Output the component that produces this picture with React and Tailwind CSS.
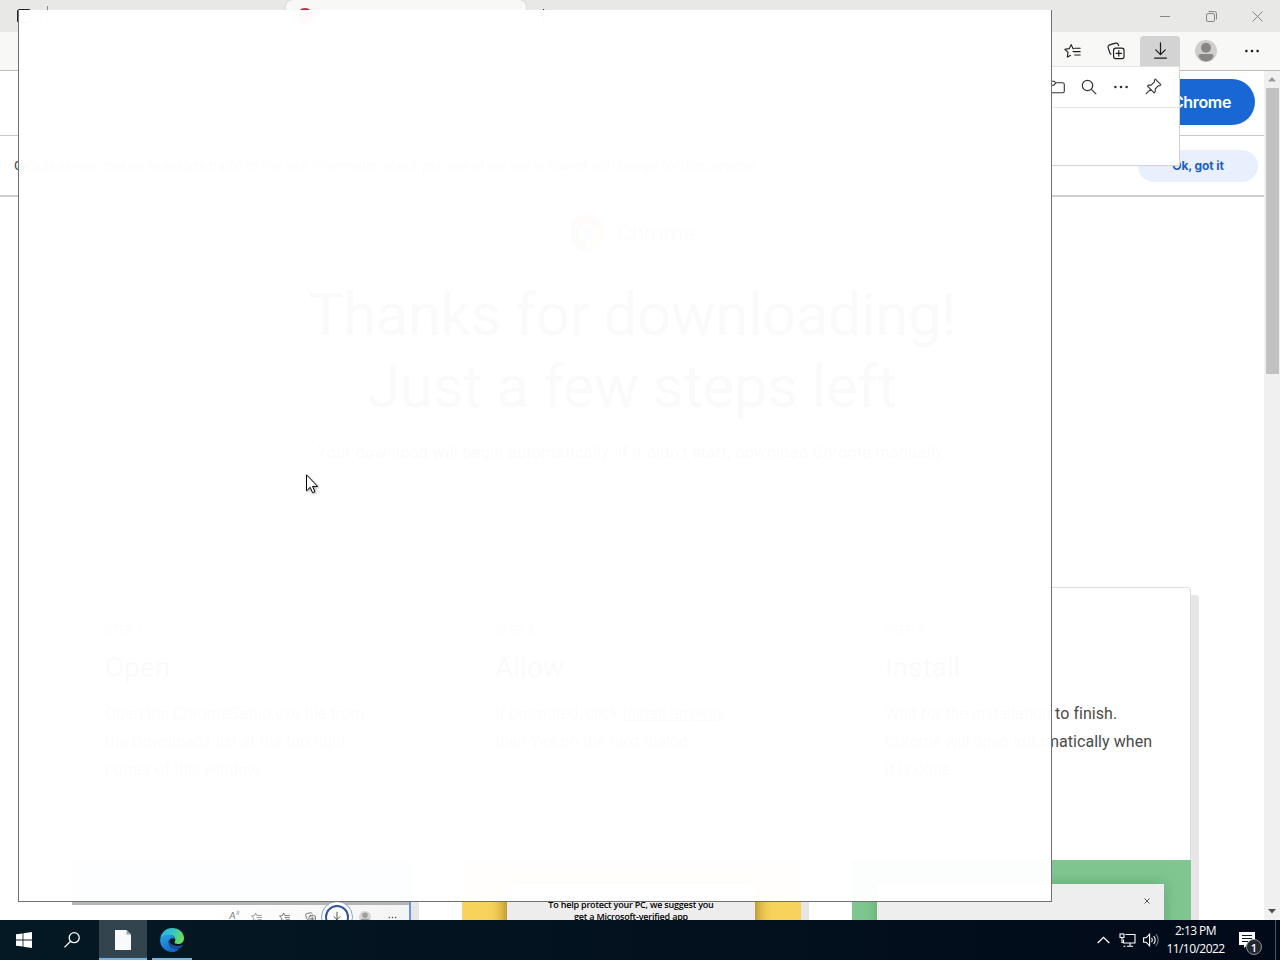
import React from 'react';

const ChromeLogo = () => (
  <svg width="36" height="36" viewBox="0 0 36 36">
    <circle cx="18" cy="18" r="18" fill="#fbc02d" />
    <path d="M18 18 L2.4 9 A18 18 0 0 1 33.6 9 Z" fill="#ea4335" />
    <path d="M18 18 L2.4 9 A18 18 0 0 0 18 36 Z" fill="#34a853" />
    <circle cx="18" cy="18" r="8.5" fill="#fff" />
    <circle cx="18" cy="18" r="6.8" fill="#4285f4" />
  </svg>
);

const FavoritesIcon = ({ size = 20 }) => (
  <svg width={size} height={size} viewBox="0 0 20 20" fill="none" stroke="currentColor" strokeWidth="1.3" strokeLinejoin="round" strokeLinecap="round">
    <path d="M11.4 6.600L10.600 6.500 8.400 1.900 6.200 6.600 1 7.400l3.800 3.700-0.900 5.400 3.600-1.900" />
    <path d="M12.600 6.200H19M10.800 10.200H19M12.600 14.200H19" />
  </svg>
);

const CollectionsIcon = ({ size = 20 }) => (
  <svg width={size} height={size} viewBox="0 0 20 20" fill="none" stroke="currentColor" strokeWidth="1.3" strokeLinecap="round">
    <path d="M4.400 13.600 a3 3 0 0 1-1.300-1.600 L1.300 6.200 a2.400 2.400 0 0 1 1.600-3 L9.600 1.300 a2.400 2.400 0 0 1 2.900 1.500 L12.900 4" />
    <rect x="7.3" y="6.800" width="11.600" height="11.600" rx="2.400" fill="#f7f7f7" />
    <path d="M13.100 9.600v6M10.100 12.600h6" />
  </svg>
);

const DownloadIcon = ({ size = 20 }) => (
  <svg width={size} height={size} viewBox="0 0 20 20" fill="none" stroke="currentColor" strokeWidth="1.3" strokeLinecap="round">
    <path d="M10 2v12.200M5 9.400l5 5 5-5M3.800 18h12.400" />
  </svg>
);

const AvatarIcon = ({ size = 22 }) => (
  <svg width={size} height={size} viewBox="0 0 22 22">
    <circle cx="11" cy="11" r="11" fill="#cfcecc" />
    <circle cx="11" cy="7.8" r="5" fill="#888785" />
    <path d="M3.4 16.2q0-2.2 2.6-2.2h10q2.6 0 2.6 2.2Q16 21.4 11 21.4T3.4 16.2z" fill="#888785" />
  </svg>
);

const DotsIcon = ({ size = 16 }) => (
  <svg width={size} height={size} viewBox="0 0 16 16" fill="currentColor">
    <circle cx="2.4" cy="8" r="1.3" />
    <circle cx="8" cy="8" r="1.3" />
    <circle cx="13.6" cy="8" r="1.3" />
  </svg>
);

const TitleBar = () => (
  <div className="flex h-8 shrink-0 bg-[#e8e8e7]">
    <div className="flex w-[286px] gap-4 pl-[17px] pt-[9px]">
      <svg width="14" height="14" viewBox="0 0 14 14" fill="none" stroke="#222" strokeWidth="1.2">
        <rect x="0.6" y="0.6" width="12.8" height="12.8" rx="2" />
      </svg>
      <div className="-mt-[3px] h-5 w-px bg-[#8a8a8a]" />
    </div>
    <div className="flex w-60 rounded-t-md bg-[#f8f8f7] pl-[11px] pt-2 shadow-[0_0_1px_#999]">
      <div className="h-4 w-4 rounded-full bg-[#c5283d]" />
    </div>
    <div className="pl-[11px] pt-[9px]">
      <svg width="13" height="13" viewBox="0 0 13 13" stroke="#333" strokeWidth="1.2">
        <path d="M6.5 0v13M0 6.5h13" />
      </svg>
    </div>
    <div className="ml-auto flex text-[#858585]">
      <div className="flex w-[46px] items-center justify-center">
        <svg width="10" height="10" stroke="currentColor"><path d="M0 5.5h10" /></svg>
      </div>
      <div className="flex w-[46px] items-center justify-center">
        <svg width="11" height="11" viewBox="0 0 11 11" fill="none" stroke="currentColor">
          <rect x="0.5" y="2.5" width="8" height="8" rx="1.5" />
          <path d="M2.5 .5h6a2 2 0 0 1 2 2v6" />
        </svg>
      </div>
      <div className="flex w-[46px] items-center justify-center">
        <svg width="11" height="11" viewBox="0 0 11 11" stroke="currentColor"><path d="M.5 .5l10 10M10.5 .5l-10 10" /></svg>
      </div>
    </div>
  </div>
);

const Toolbar = () => (
  <div className="flex h-[39px] shrink-0 items-center justify-end border-b border-[#bdbdbd] bg-[#f8f8f7] text-[#1b1b1b]">
    <div className="flex w-11 justify-center"><FavoritesIcon size={17} /></div>
    <div className="flex w-11 justify-center"><CollectionsIcon size={18} /></div>
    <div className="ml-0.5 flex h-[34px] w-10 justify-center self-end rounded-t bg-[#d3d3d3] pt-[5px]"><DownloadIcon size={19} /></div>
    <div className="ml-[15px] flex"><AvatarIcon /></div>
    <div className="ml-[27px] mr-5 flex"><DotsIcon size={16} /></div>
  </div>
);

const DownloadsFlyout = () => (
  <div className="absolute right-[100px] top-[66px] h-[100px] w-[360px] border border-t-[#e2e2e2] border-[#d2d2d2] bg-white text-[#333]">
    <div className="flex h-[41px] items-center justify-end gap-4 border-b border-[#e6e6e6] pb-px pr-[17px]">
      <svg width="16" height="16" viewBox="0 0 16 16" fill="none" stroke="currentColor" strokeWidth="1.1">
        <path d="M.6 3.8q0-1.6 1.6-1.6h3l1.6 1.6h6.8q1.7 0 1.7 1.6v6.8q0 1.6-1.7 1.6H2.2q-1.6 0-1.6-1.6zM.6 6.2h4.2l2-2.4" />
      </svg>
      <svg width="16" height="16" viewBox="0 0 16 16" fill="none" stroke="currentColor" strokeWidth="1.2">
        <circle cx="6.5" cy="6.5" r="5.2" />
        <path d="M10.3 10.3l4.9 4.9" />
      </svg>
      <DotsIcon size={16} />
      <svg width="17" height="17" viewBox="0 0 17 17" fill="none" stroke="currentColor" strokeWidth="1.1" strokeLinejoin="round">
        <path d="M10.4 1.2l5.4 5.4-1 1-1.4.1-3.2 3.3.1 2.5-1.1 1.3-6.7-6.7 1.2-1.1 2.5.1L9.4 3.8V2.3zM5.8 11.2l-5 5" />
      </svg>
    </div>
  </div>
);

const MiniToolbar = () => (
  <div className="flex flex-1 flex-col border-r-2 border-[#6f93d8] bg-white">
    <div className="h-[45px] shrink-0 border-b-[3px] border-[#b5b5b5] bg-[#9cc8f2]" />
    <div className="flex h-6 shrink-0 items-center justify-end bg-gradient-to-r from-white from-40% to-[#f4f4f5] pr-3 text-[#444]">
      <span className="mb-1 mr-3 font-['Lato'] text-[10px] italic leading-none text-[#777]">A⁾⁾</span>
      <span className="mr-[17px] text-[#777]"><FavoritesIcon size={11} /></span>
      <span className="mr-[15px]"><FavoritesIcon size={11} /></span>
      <span className="mr-[5px]"><CollectionsIcon size={11} /></span>
      <span className="flex h-8 w-8 items-center justify-center rounded-full border border-[#7da2e0] bg-white">
        <span className="flex h-6 w-6 items-center justify-center rounded-full border-2 border-[#34549c] text-[#222]"><DownloadIcon size={12} /></span>
      </span>
      <span className="ml-1.5 mr-[17px] opacity-80"><AvatarIcon size={12} /></span>
      <DotsIcon size={9} />
    </div>
  </div>
);

const StepCard = ({ step, title, children, picture }) => (
  <div className="flex h-[420px] w-[339px] shrink-0 flex-col rounded border border-[#dcdcdc] bg-white font-['Roboto'] text-[#4a4a4a] shadow-[8px_8px_0_#e6e6e6]">
    <div className="h-[272px] shrink-0 pl-8 pt-8">
      <p className="text-xs leading-5">{step}</p>
      <h2 className="mb-3 mt-2 text-[28px] leading-10 text-[#202124]">{title}</h2>
      <div className="whitespace-nowrap text-base leading-7 tracking-[0.05px]">{children}</div>
    </div>
    <div className="-mx-px flex flex-1">{picture}</div>
  </div>
);

const Page = () => (
  <div className="flex min-h-0 flex-1">
    <div className="flex flex-1 flex-col overflow-hidden bg-white">
      <div className="flex h-[65px] shrink-0 items-center justify-end border-b border-[#c8c8c8] pr-[9px]">
        <div className="mb-0.5 flex h-[46px] items-center rounded-full bg-[#1967d2] px-6 font-['Inter'] text-base font-semibold tracking-[-0.35px] text-white">
          Download Chrome
        </div>
      </div>
      <div className="flex h-[61px] shrink-0 items-center justify-between border-b-2 border-[#cfcfcf] pl-3.5 pr-1.5 font-['Roboto'] text-[13px] text-[#3c4043]">
        <p>Google serves cookies to analyze traffic to this site. Information about your use of our site is shared with Google for that purpose.</p>
        <div className="flex h-8 w-[120px] items-center justify-center rounded-full bg-[#e8f0fe] font-['Inter'] text-xs font-bold tracking-[-0.1px] text-[#1f5fbe]">
          Ok, got it
        </div>
      </div>
      <div className="flex h-[390px] shrink-0 flex-col items-center pt-[18px] text-[#202124]">
        <div className="flex items-center gap-3 font-['Roboto'] text-[22px] text-[#5f6368]">
          <ChromeLogo />
          Chrome
        </div>
        <h1 className="mt-7 whitespace-nowrap text-center font-['Roboto'] text-[60px] leading-[72px] tracking-[-0.5px]">
          Thanks for downloading!<br />Just a few steps left
        </h1>
        <p className="mt-[18px] font-['Roboto'] text-base tracking-[0.4px]">
          Your download will begin automatically. If it didn’t start, download Chrome manually.
        </p>
      </div>
      <div className="flex gap-[51px] pl-[72px]">
        <StepCard step="STEP 1" title="Open" picture={<MiniToolbar />}>
          Open the ChromeSetup.exe file from<br />the Downloads list at the top right<br />corner of this window.
        </StepCard>
        <StepCard
          step="STEP 2"
          title="Allow"
          picture={
            <div className="flex flex-1 bg-[#f8d35c] pt-6">
              <div className="ml-[45px] w-[248px] bg-[#ededee] pt-[15px] text-center font-['Open_Sans'] text-[9px] font-semibold leading-3 tracking-[-0.2px] text-black shadow-[0_0_16px_#8a6a10]">
                To help protect your PC, we suggest you<br />get a Microsoft-verified app
              </div>
            </div>
          }
        >
          If prompted, click <u>Install anyway</u>,<br />then Yes on the next dialog.
        </StepCard>
        <StepCard
          step="STEP 3"
          title="Install"
          picture={
            <div className="flex flex-1 bg-[#7fc690] pt-6">
              <div className="ml-[25px] flex w-[287px] justify-end bg-[#eeeeee] pr-3.5 pt-[14px] shadow-[0_0_14px_#5fa873]">
                <svg width="6" height="6" stroke="#555" strokeWidth="1"><path d="M.5 .5l5 5M5.5 .5l-5 5" /></svg>
              </div>
            </div>
          }
        >
          Wait for the installation to finish.<br />Chrome will open automatically when<br />it is done.
        </StepCard>
      </div>
    </div>
    <div className="flex w-4 flex-col items-center bg-[#f0f0f0]">
      <svg className="my-1.5 shrink-0" width="8" height="5" fill="#999"><path d="M4 0l4 4.5H0z" /></svg>
      <div className="h-[286px] w-[13px] bg-[#c1c1c1]" />
      <svg className="mb-1.5 mt-auto shrink-0" width="8" height="5" fill="#505050"><path d="M0 0h8L4 4.5z" /></svg>
    </div>
  </div>
);

const EdgeLogo = () => (
  <svg width="24" height="24" viewBox="0 0 24 24">
    <defs>
      <linearGradient id="edgeTop" x1="0" y1="0.3" x2="1" y2="0.6">
        <stop offset="0" stopColor="#2bb3ea" />
        <stop offset="0.5" stopColor="#36c6c0" />
        <stop offset="1" stopColor="#6fe04e" />
      </linearGradient>
      <linearGradient id="edgeLeft" x1="0" y1="0" x2="0.6" y2="1">
        <stop offset="0" stopColor="#2aa6e6" />
        <stop offset="1" stopColor="#1464c4" />
      </linearGradient>
    </defs>
    <path d="M.2 11C1 4.500 6 0 12.200 0 19 0 24 4.800 24 10.200c0 3.600-2.700 5.900-6 5.900-2.600 0-4-1-3.300-2 1.500-2.200.4-7-5-7C5 7.100.8 9.500.2 11z" fill="url(#edgeTop)" />
    <path d="M.1 11.600C.6 8.800 4.500 6.700 9 6.700c3.500 0 5.600 2 6 4.300-4-2-7 1-6.200 4.600.8 3.700 5 6.200 10.600 4.800C17.500 22.800 15 24 12 24 5 24-.3 18.400.1 11.600z" fill="url(#edgeLeft)" />
    <path d="M9 12.600c-1.200 4.300 3 9.200 9.700 8.100 1.700-.4 3-1.500 3.900-2.900.3-.6-.1-.9-.6-.7-5.500 2.300-11.500 0-13-4.500z" fill="#1b4f9c" />
  </svg>
);

const Taskbar = () => (
  <div className="flex h-10 shrink-0 bg-gradient-to-r from-[#041923] to-[#020a19] text-white">
    <div className="flex w-12 items-center justify-center">
      <svg width="16" height="16" viewBox="0 0 16 16" fill="#fff">
        <path d="M0 2.300l6.600-.9v6.200H0zM7.400 1.300L16 0v7.600H7.400zM0 8.400h6.600v6.200L0 13.700zM7.400 8.400H16V16l-8.600-1.300z" />
      </svg>
    </div>
    <div className="flex w-12 items-center justify-center">
      <svg width="16" height="16" viewBox="0 0 16 16" fill="none" stroke="#fff" strokeWidth="1.3">
        <circle cx="10.200" cy="5.700" r="5" />
        <path d="M6.600 9.300L.5 15.400" />
      </svg>
    </div>
    <div className="ml-[3px] flex w-12 items-center justify-center border-b-2 border-[#76b5e4] bg-[#33444e] pt-0.5">
      <svg width="16" height="20" viewBox="0 0 16 20">
        <path d="M0 0h11.500L16 4.500V20H0z" fill="#f8fafb" />
        <path d="M11.500 0v4.500H16z" fill="#9aa5ab" />
      </svg>
    </div>
    <div className="ml-[5px] flex w-10 items-center justify-center border-b-2 border-[#76b5e4] pt-0.5"><EdgeLogo /></div>
    <div className="ml-auto flex items-center">
      <svg width="13" height="8" viewBox="0 0 13 8" fill="none" stroke="#fff" strokeWidth="1.3"><path d="M.7 7l5.800-5.600L12.300 7" /></svg>
      <svg className="ml-[9px]" width="17" height="14" viewBox="0 0 17 14" fill="none" stroke="#fff" strokeWidth="1.1">
        <path d="M6.500 1.500h9.500v8.500H4.500V6.500M8 13.300h6M11 10v3.300M4.500 13.300h2" />
        <rect x="1" y="1" width="4" height="3.500" />
        <path d="M3 4.500v5h2" />
      </svg>
      <svg className="ml-[7px]" width="17" height="14" viewBox="0 0 17 14" fill="none" stroke="#fff" strokeWidth="1.100">
        <path d="M.6 4.800h2.600l3.400-3.600v11.600L3.200 9.200H.6z" />
        <path d="M8.600 4.800q1.500 2.200 0 4.400M10.700 3q3 4 0 8" />
        <path d="M12.900 1.200q4.500 5.800 0 11.600" opacity="0.45" />
      </svg>
      <div className="ml-[5px] w-[61px] whitespace-nowrap text-center font-['Open_Sans'] text-xs leading-[18px] tracking-[-0.55px]">
        <p>2:13 PM</p>
        <p>11/10/2022</p>
      </div>
      <div className="relative ml-[13px] mr-3 w-[24px]">
        <svg width="16" height="16" viewBox="0 0 16 16">
          <path d="M0 0h16v13H8l-3 3v-3H0z" fill="#fff" />
          <path d="M3 3.500h10M3 6.500h10M3 9.500h6" stroke="#0a1622" strokeWidth="1.200" />
        </svg>
        <span className="absolute left-[7px] top-[7px] flex h-4 w-4 items-center justify-center rounded-full border border-[#8a8f96] bg-[#23282f] font-['Open_Sans'] text-[11px] font-semibold leading-none">1</span>
      </div>
      <div className="mr-1 h-10 w-px bg-[#4a525c]" />
    </div>
  </div>
);

// Window that is still fading in above the browser
const LoadingWindow = () => (
  <div className="absolute left-[18px] top-[10px] h-[892px] w-[1034px] border border-t-0 border-[#707070] bg-white/98" />
);

const Cursor = () => (
  <svg className="absolute left-[306px] top-[474px] drop-shadow-[1px_1px_1px_rgba(0,0,0,0.35)]" width="13" height="20" viewBox="0 0 13 20">
    <path d="M.5 .8v16l3.700-3.500 2.300 5.400 2.400-1-2.300-5.300h5z" fill="#fff" stroke="#000" strokeWidth="1" />
  </svg>
);

export default function App() {
  return (
    <div className="relative flex h-[960px] w-[1280px] flex-col overflow-hidden bg-white">
      <TitleBar />
      <Toolbar />
      <Page />
      <Taskbar />
      <DownloadsFlyout />
      <LoadingWindow />
      <Cursor />
    </div>
  );
}
